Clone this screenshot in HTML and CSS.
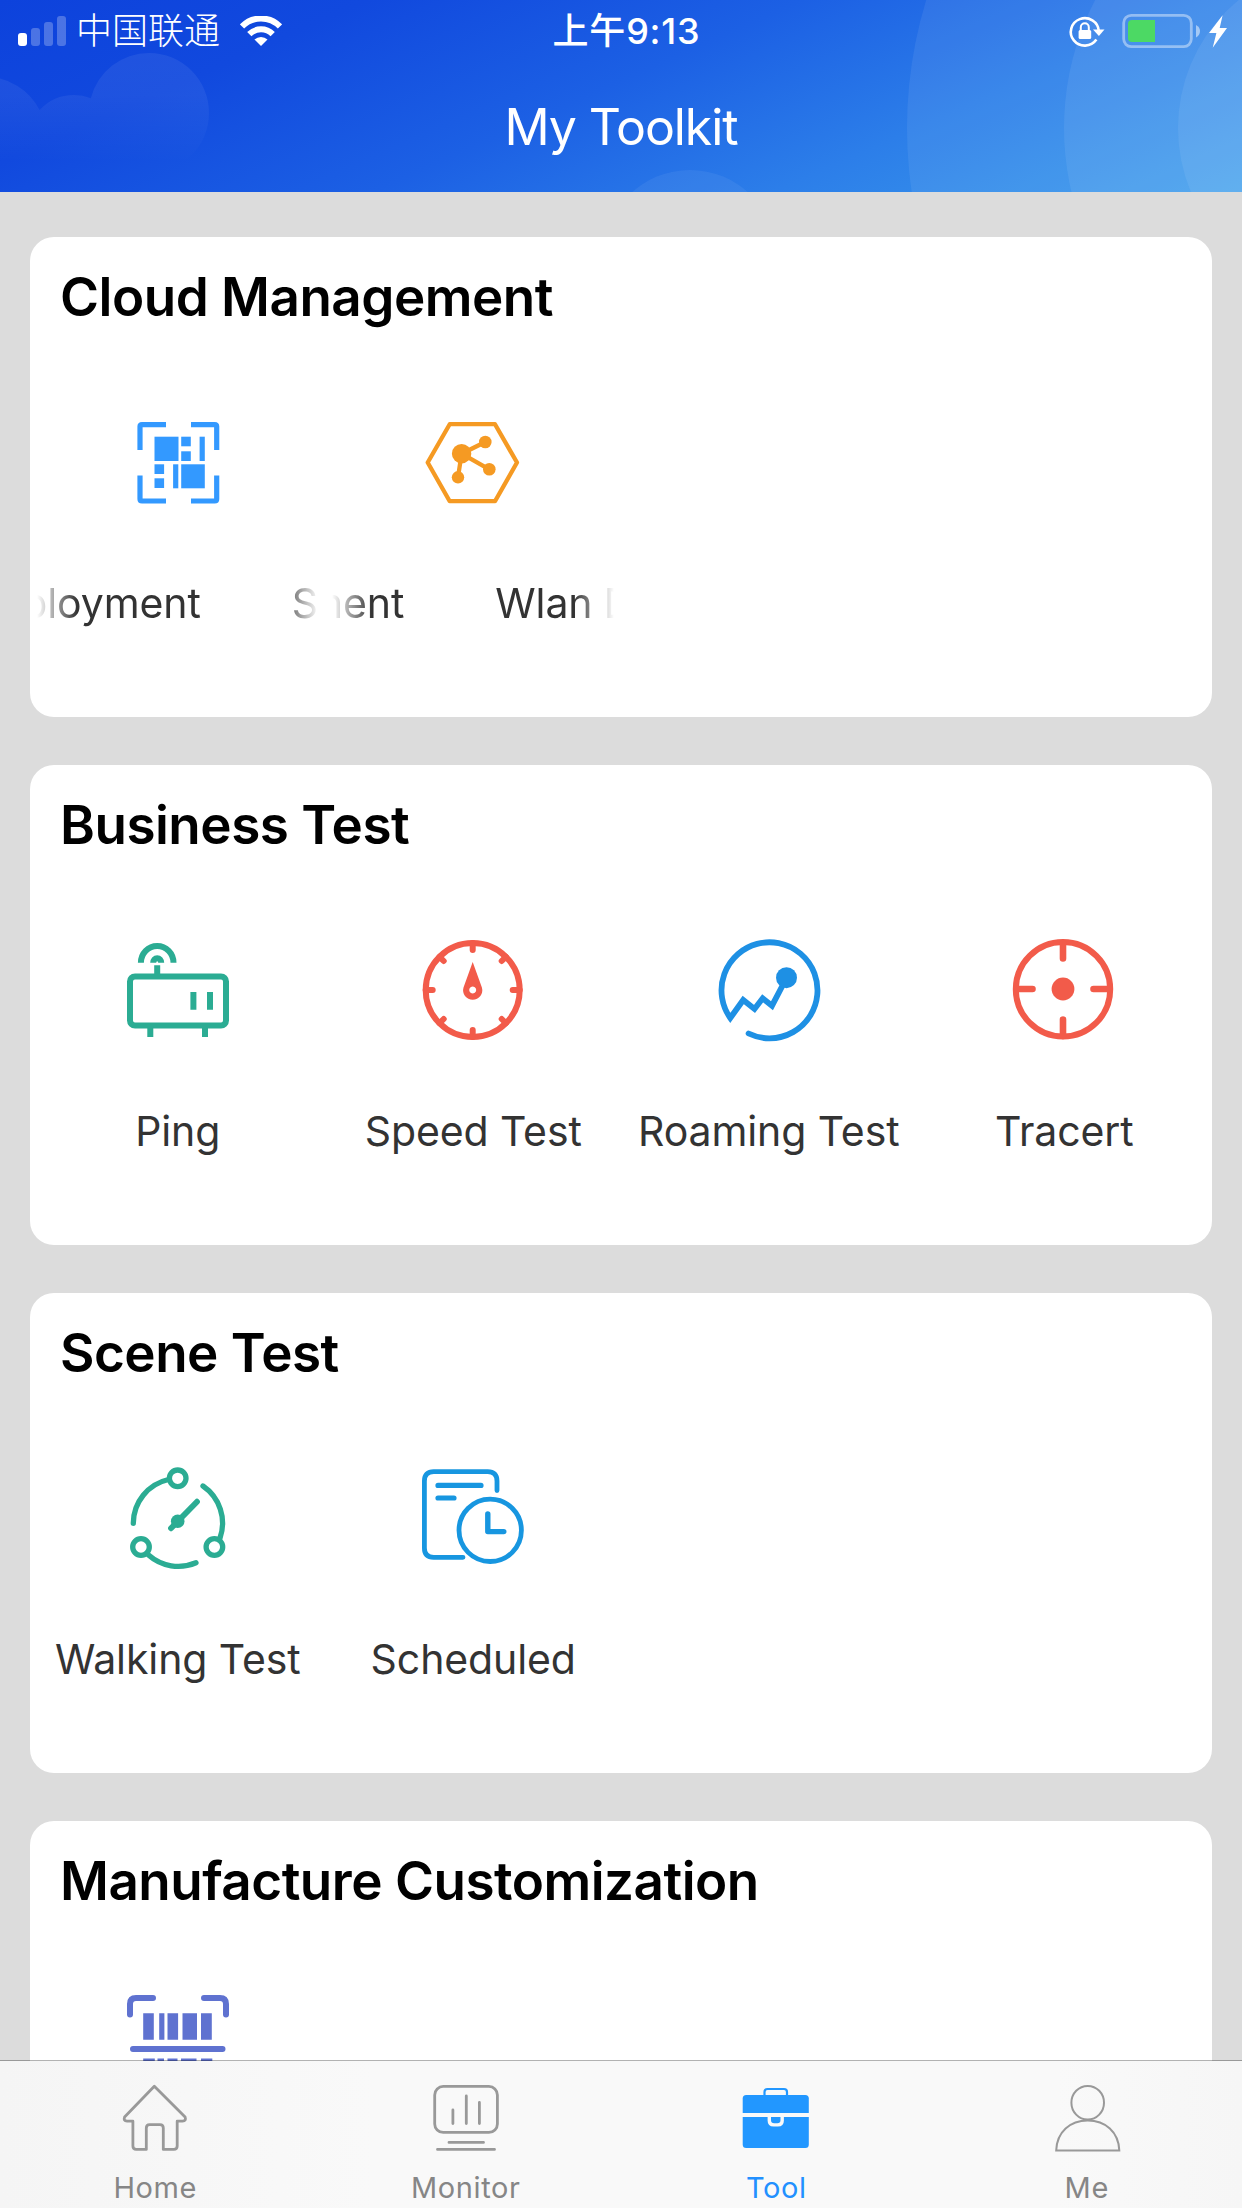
FILE: index.html
```html
<!DOCTYPE html>
<html lang="en">
<head>
    <meta charset="UTF-8" />
    <meta name="viewport" content="width=device-width, initial-scale=1.0"/>
    <title>My Toolkit</title>
    <link rel="stylesheet" href="styles.css">
</head>
<body>

    <header class="header">
        <svg class="header-bg" viewBox="0 0 1242 192">
            <defs>
                <linearGradient id="cloudFade" gradientUnits="userSpaceOnUse" x1="0" y1="50" x2="0" y2="162">
                    <stop offset="0" stop-color="#fff" stop-opacity=".07"/>
                    <stop offset=".4" stop-color="#fff" stop-opacity=".06"/>
                    <stop offset="1" stop-color="#fff" stop-opacity="0"/>
                </linearGradient>
                <clipPath id="cloud">
                    <circle cx="149" cy="113" r="60"/>
                    <circle cx="74" cy="142" r="47"/>
                    <circle cx="-14" cy="137" r="60"/>
                </clipPath>
            </defs>
            <rect width="220" height="192" fill="url(#cloudFade)" clip-path="url(#cloud)"/>
            <g fill="#fff" fill-opacity=".07">
                <circle cx="1343" cy="128" r="436"/>
                <circle cx="1343" cy="128" r="279"/>
                <circle cx="1343" cy="128" r="165"/>
                <circle cx="690" cy="257" r="87" fill-opacity=".06"/>
            </g>
        </svg>

        <div class="status-bar">
            <div class="status-left">
                <svg class="signal" width="48" height="30" viewBox="0 0 48 30" fill="#fff">
                    <rect y="17" width="9" height="13" rx="3"/>
                    <g opacity=".25">
                        <rect x="13" y="12" width="9" height="18" rx="3"/>
                        <rect x="26" y="6" width="9" height="24" rx="3"/>
                        <rect x="39" y="0" width="9" height="30" rx="3"/>
                    </g>
                </svg>
                <span class="carrier">中国联通</span>
                <svg class="wifi" width="42" height="30" viewBox="0 0 42 30" fill="none" stroke="#fff" stroke-width="6">
                    <path d="M2 10.5 A26.5 26.5 0 0 1 40 10.5"/>
                    <path d="M9.3 18.2 A16.5 16.5 0 0 1 32.7 18.2"/>
                    <path d="M14.5 23.5 A9.5 9.5 0 0 1 27.5 23.5 L21 30 Z" fill="#fff" stroke="none"/>
                </svg>
            </div>
            <div class="time">上午9:13</div>
            <div class="status-right">
                <svg width="164" height="36" viewBox="1066 12 164 36">
                    <path d="M1096.4 38.6 A14 13.7 0 1 1 1098.8 30" fill="none" stroke="#fff" stroke-width="2.6"/>
                    <path d="M1093 28.5 h11.5 l-5.6 6.5 z" fill="#fff"/>
                    <rect x="1078.6" y="29" width="12.6" height="9" rx="1.5" fill="#fff"/>
                    <path d="M1080.8 30 v-3.8 a4 4 0 0 1 8 0 v3.8" fill="none" stroke="#fff" stroke-width="2"/>
                    <rect x="1123.7" y="14.4" width="67.6" height="31.2" rx="7.5" fill="none" stroke="#fff" stroke-opacity=".42" stroke-width="2.8"/>
                    <path d="M1155 19 v22 h-23 a4 4 0 0 1 -4 -4 v-14 a4 4 0 0 1 4 -4 z" fill="#4cd964"/>
                    <path d="M1196 24 q4 2 4 6 t-4 6.5 z" fill="#fff" fill-opacity=".5"/>
                    <path d="M1222.6 14.3 L1209 32 h7.4 L1212.7 46.7 L1227 27 h-7.3 z" fill="#fff"/>
                </svg>
            </div>
        </div>
        <h1 class="title">My Toolkit</h1>
    </header>

    <main class="cards">

        <section class="card">
            <h2>Cloud Management</h2>
            <div class="tools">
                <div class="tool">
                    <svg viewBox="0 0 120 120" fill="#3399ff">
                        <path d="M49 22.6 H25 q-2 0 -2 2 V48 M74 22.6 H97.7 q2 0 2 2 V48 M23 73.5 V97 q0 2 2 2 H49 M99.7 73.5 V97 q0 2 -2 2 H74" fill="none" stroke="#3399ff" stroke-width="5.2"/>
                        <rect x="37.5" y="34.7" width="24" height="24.3"/>
                        <rect x="64.2" y="34.7" width="9.6" height="9.6"/>
                        <rect x="64.2" y="49.3" width="9.6" height="9.7"/>
                        <rect x="82.6" y="34.7" width="5.2" height="24.3"/>
                        <rect x="37.5" y="62.3" width="9.6" height="9.7"/>
                        <rect x="37.5" y="76.3" width="9.6" height="9.7"/>
                        <rect x="56.1" y="62.3" width="5.2" height="24"/>
                        <rect x="64.2" y="62.3" width="23.6" height="24"/>
                    </svg>
                    <div class="marquee">
                        <span class="tail tail-a">ployment</span>
                        <span class="head">S</span>
                    </div>
                </div>
                <div class="tool">
                    <svg viewBox="0 0 120 120" fill="#f59a23" stroke="#f59a23" stroke-width="4.3">
                        <path d="M15.7 60.5 L37.7 22.2 H83 L105 60.5 L83 99.2 H37.7 Z" fill="none" stroke-linejoin="round"/>
                        <path d="M73.3 40 L49.6 51.7 L77.3 67.3 M49.6 51.7 L46 75.3" fill="none"/>
                        <g stroke="none">
                            <circle cx="49.6" cy="51.7" r="9.7"/>
                            <circle cx="73.3" cy="40" r="6.3"/>
                            <circle cx="77.3" cy="67.3" r="6.3"/>
                            <circle cx="46" cy="75.3" r="6.2"/>
                        </g>
                    </svg>
                    <div class="marquee">
                        <span class="tail tail-b">ment</span>
                        <span class="head">Wlan D</span>
                    </div>
                </div>
            </div>
        </section>

        <section class="card">
            <h2>Business Test</h2>
            <div class="tools">
                <div class="tool">
                    <svg viewBox="0 0 120 120" fill="none" stroke="#2bac93" stroke-width="6">
                        <rect x="13" y="46.5" width="96" height="49" rx="5"/>
                        <path d="M33.3 96 V107 M88 96 V107 M76.4 62 V79.7 M93 62 V79.7 M40.2 35.3 V46"/>
                        <path d="M23.9 32.7 A16.3 16.7 0 0 1 56.5 32.7"/>
                        <path d="M36.2 32.7 A4 4.5 0 0 1 44.2 32.7"/>
                    </svg>
                    <span class="label">Ping</span>
                </div>
                <div class="tool">
                    <svg viewBox="0 0 120 120" fill="none" stroke="#f25b4a" stroke-width="6" stroke-linecap="round">
                        <circle cx="60.7" cy="60" r="47"/>
                        <path d="M60.7 13 V20 M60.7 107 V100 M13.7 60 H20.7 M107.7 60 H100.7 M27.5 26.8 L31.7 31 M93.9 26.8 L89.7 31 M27.5 93.2 L31.7 89 M93.9 93.2 L89.7 89"/>
                        <path d="M60.7 32 L69.9 57.5 A9.6 9.6 0 1 1 51.5 57.5 Z M60.7 56.5 a3.5 3.5 0 1 0 .01 0 Z" fill="#f25b4a" fill-rule="evenodd" stroke="none"/>
                    </svg>
                    <span class="label">Speed Test</span>
                </div>
                <div class="tool">
                    <svg viewBox="0 0 120 120" fill="none" stroke="#1e90e4" stroke-width="5.8" stroke-linecap="round">
                        <path d="M40.6 103.5 A48 48 0 1 0 22.3 88 L35.2 70 L46.5 79 L54.7 68.3 L64 75.7 L78.5 48"/>
                        <circle cx="78.5" cy="47.7" r="10.5" fill="#1e90e4" stroke="none"/>
                    </svg>
                    <span class="label">Roaming Test</span>
                </div>
                <div class="tool">
                    <svg viewBox="0 0 120 120" fill="none" stroke="#f25b4a" stroke-width="6">
                        <circle cx="60" cy="59.3" r="47.2"/>
                        <path d="M60 13 V28.5 M60 106 V89.5 M13.5 59 H29.5 M106.500 59 H90.5" stroke-width="6.6" stroke-linecap="round"/>
                        <circle cx="60" cy="59" r="11.4" fill="#f25b4a" stroke="none"/>
                    </svg>
                    <span class="label">Tracert</span>
                </div>
            </div>
        </section>

        <section class="card">
            <h2>Scene Test</h2>
            <div class="tools">
                <div class="tool">
                    <svg viewBox="0 0 120 120" fill="none" stroke="#2bac93" stroke-width="5.3" stroke-linecap="round">
                        <circle cx="60.7" cy="20.3" r="8.3"/>
                        <circle cx="24" cy="89" r="8.3"/>
                        <circle cx="97.4" cy="89" r="8.3"/>
                        <path d="M16.3 65.3 A45 45 0 0 1 51.5 21.5 M86 28 A45 45 0 0 1 103 80 M31.5 97 A45 45 0 0 0 79 104.8"/>
                        <path d="M54 70.3 L80 43.7" stroke-width="5.8"/>
                        <circle cx="60.7" cy="63.3" r="6.8" fill="#2bac93" stroke="none"/>
                    </svg>
                    <span class="label">Walking Test</span>
                </div>
                <div class="tool">
                    <svg viewBox="0 0 120 120" fill="none" stroke="#1796e0" stroke-width="4.8" stroke-linecap="round" stroke-linejoin="round">
                        <path d="M85 32.5 V23 q0 -9.3 -9.3 -9.3 H21.7 q-9.3 0 -9.3 9.3 V90 q0 9.3 9.3 9.3 H51"/>
                        <path d="M26 27.4 H69 M26 40 H42" stroke-width="5.2"/>
                        <circle cx="78.2" cy="72.3" r="31.2"/>
                        <path d="M75.8 56 V73.6 H91.8" stroke-width="5.4"/>
                    </svg>
                    <span class="label">Scheduled</span>
                </div>
            </div>
        </section>

        <section class="card">
            <h2>Manufacture Customization</h2>
            <div class="tools">
                <div class="tool">
                    <svg viewBox="0 0 120 120" fill="#5f72d0">
                        <path d="M36 12 H19 q-6 0 -6 6 V28.5 M87 12 H103 q6 0 6 6 V28.5 M13 92 V102 q0 6 6 6 H36 M109 92 V102 q0 6 -6 6 H87 M16 63 H105.5" fill="none" stroke="#5f72d0" stroke-width="6" stroke-linecap="round"/>
                        <path d="M26.2 27.3 h10.6 v26.4 h-10.6 z M42.2 27.3 h5.2 v26.4 h-5.2 z M50.5 27.3 h10.6 v26.4 h-10.6 z M65.5 27.3 h14.5 v26.4 h-14.5 z M84 27.3 h10.8 v26.4 h-10.8 z"/>
                        <path d="M26.2 72.5 h11.6 v20 h-11.6 z M40.5 72.5 h6.5 v20 h-6.5 z M50.5 72.5 h10 v20 h-10 z M64 72.5 h15.5 v20 h-15.5 z M84 72.5 h11.3 v20 h-11.3 z"/>
                    </svg>
                </div>
            </div>
        </section>

    </main>

    <nav class="tab-bar">
        <a class="tab">
            <svg viewBox="0 0 72 72" fill="none" stroke="#999" stroke-width="2.8" stroke-linejoin="round">
                <path d="M35.3 4.3 L5.6 35 q-1.5 4 2.5 4.2 H13.9 V64 q0 3.4 3.4 3.4 H27.3 V46 q0 -3.3 3.3 -3.3 H41 q3.3 0 3.3 3.3 V67.4 H54.8 q3.4 0 3.4 -3.4 V39.2 H63.5 q4 -.2 2.6 -4.2 Z"/>
            </svg>
            <span>Home</span>
        </a>
        <a class="tab">
            <svg viewBox="0 0 72 72" fill="none" stroke="#999" stroke-width="2.8" stroke-linecap="round">
                <rect x="4.7" y="4.4" width="62.7" height="46" rx="8.5"/>
                <path d="M22.9 28 V41.5 M36.3 14 V41.5 M49.4 20.5 V41.5 M19 60.4 H53.5 M7.5 67.4 H64.5"/>
            </svg>
            <span>Monitor</span>
        </a>
        <a class="tab active">
            <svg viewBox="0 0 72 72" fill="#2297ff">
                <path d="M2.7 31 V16.5 q0 -3.5 3.5 -3.5 H65.3 q3.5 0 3.5 3.5 V31 Z"/>
                <path d="M2.7 35 H27.6 V38.5 q0 6 6 6 H37.9 q6 0 6 -6 V35 H68.8 V62.5 q0 3.5 -3.5 3.5 H6.2 q-3.5 0 -3.5 -3.5 Z"/>
                <path d="M31 35 H40.5 V38 q0 3.2 -3.2 3.2 H34.2 q-3.2 0 -3.2 -3.2 Z"/>
                <path d="M24.500 14 V10 q0 -3 3 -3 H44 q3 0 3 3 V14" fill="none" stroke="#2297ff" stroke-width="2.2"/>
            </svg>
            <span>Tool</span>
        </a>
        <a class="tab">
            <svg viewBox="0 0 72 72" fill="none" stroke="#999" stroke-width="2">
                <ellipse cx="36.7" cy="20.7" rx="16.3" ry="16.8"/>
                <path d="M5.2 68.4 C6 50 19 38.6 36.7 38.6 S67.5 50 68.3 68.4 Z"/>
            </svg>
            <span>Me</span>
        </a>
    </nav>

</body>
</html>
```
FILE: styles.css
```css
* {
    box-sizing: border-box;
}
body {
    font-family: Inter, 'Noto Sans CJK SC', 'Liberation Sans', sans-serif;
    background: #dcdcdc;
    color: #333;
    margin: 0;
    height: 2208px;
    overflow: hidden;
}
svg {
    display: block;
    flex: none;
}

/* header */
.header {
    position: relative;
    height: 192px;
    color: #fff;
    background: linear-gradient(156deg, #0d42dc 0%, #1149de 22%, #1c60e4 48%, #2c7ee9 72%, #3c9dec 100%);
    overflow: hidden;
}
.header-bg {
    position: absolute;
    top: 0;
    left: 0;
    width: 1242px;
    height: 192px;
}
.status-bar {
    position: relative;
    display: grid;
    grid-template-columns: 1fr auto 1fr;
    align-items: center;
    height: 60px;
    padding: 0 12px 0 18px;
}
.status-left {
    display: flex;
    align-items: center;
}
.carrier {
    font-size: 36px;
    font-weight: 300;
    line-height: 60px;
    margin: 0 20px 0 10px;
}
.time {
    font-size: 36px;
    font-weight: 500;
    line-height: 60px;
    letter-spacing: 0.8px;
    padding: 1px 0 0 5px;
}
.status-right {
    display: flex;
    justify-content: flex-end;
}
.title {
    position: relative;
    margin: 0;
    padding-top: 34px;
    text-align: center;
    font-size: 50px;
    font-weight: 400;
    line-height: 66px;
    letter-spacing: -1.1px;
}

/* cards */
.cards {
    display: flex;
    flex-direction: column;
    gap: 48px;
    padding: 45px 30px 0;
}
.card {
    height: 480px;
    flex: none;
    background: #fff;
    border-radius: 24px;
}
.card h2 {
    margin: 0;
    padding: 28px 0 0 30px;
    font-size: 53px;
    font-weight: 600;
    line-height: 64px;
    color: #000;
    letter-spacing: -0.5px;
}
.tools {
    display: grid;
    grid-template-columns: repeat(4, 1fr);
    padding-top: 73px;
}
.tool {
    display: flex;
    flex-direction: column;
    align-items: center;
}
.tool svg {
    width: 120px;
    height: 120px;
    margin-right: 2px;
}
.label,
.marquee {
    margin-top: 56px;
    font-size: 41px;
    line-height: 50px;
    letter-spacing: -0.1px;
    white-space: nowrap;
}

.marquee {
    display: flex;
    width: 282px;
    overflow: hidden;
    -webkit-mask-image: linear-gradient(90deg, transparent 0, #000 40px, #000 242px, transparent 282px);
    mask-image: linear-gradient(90deg, transparent 0, #000 40px, #000 242px, transparent 282px);
}
.tail {
    display: flex;
    justify-content: flex-end;
    flex: none;
    overflow: hidden;
}
.tail-a {
    width: 164px;
}
.tail-b {
    width: 72px;
}
.head {
    flex: none;
    margin-left: 91px;
}

/* bottom tabs */
.tab-bar {
    position: fixed;
    left: 0;
    right: 0;
    bottom: 0;
    height: 148px;
    display: grid;
    grid-template-columns: repeat(4, 1fr);
    background: linear-gradient(90deg, #f5f5f5, #f9f9f9 30%, #f9f9f9 85%, #f6f6f6);
    background-clip: padding-box;
    border-top: 1px solid rgba(0, 0, 0, 0.3);
}
.tab {
    display: flex;
    flex-direction: column;
    align-items: center;
    padding-top: 21px;
    color: #868686;
    font-size: 29px;
    line-height: 36px;
    letter-spacing: 0.6px;
}
.tab svg {
    width: 72px;
    height: 72px;
    margin-bottom: 16px;
}
.tab.active {
    color: #2290ff;
}
```
